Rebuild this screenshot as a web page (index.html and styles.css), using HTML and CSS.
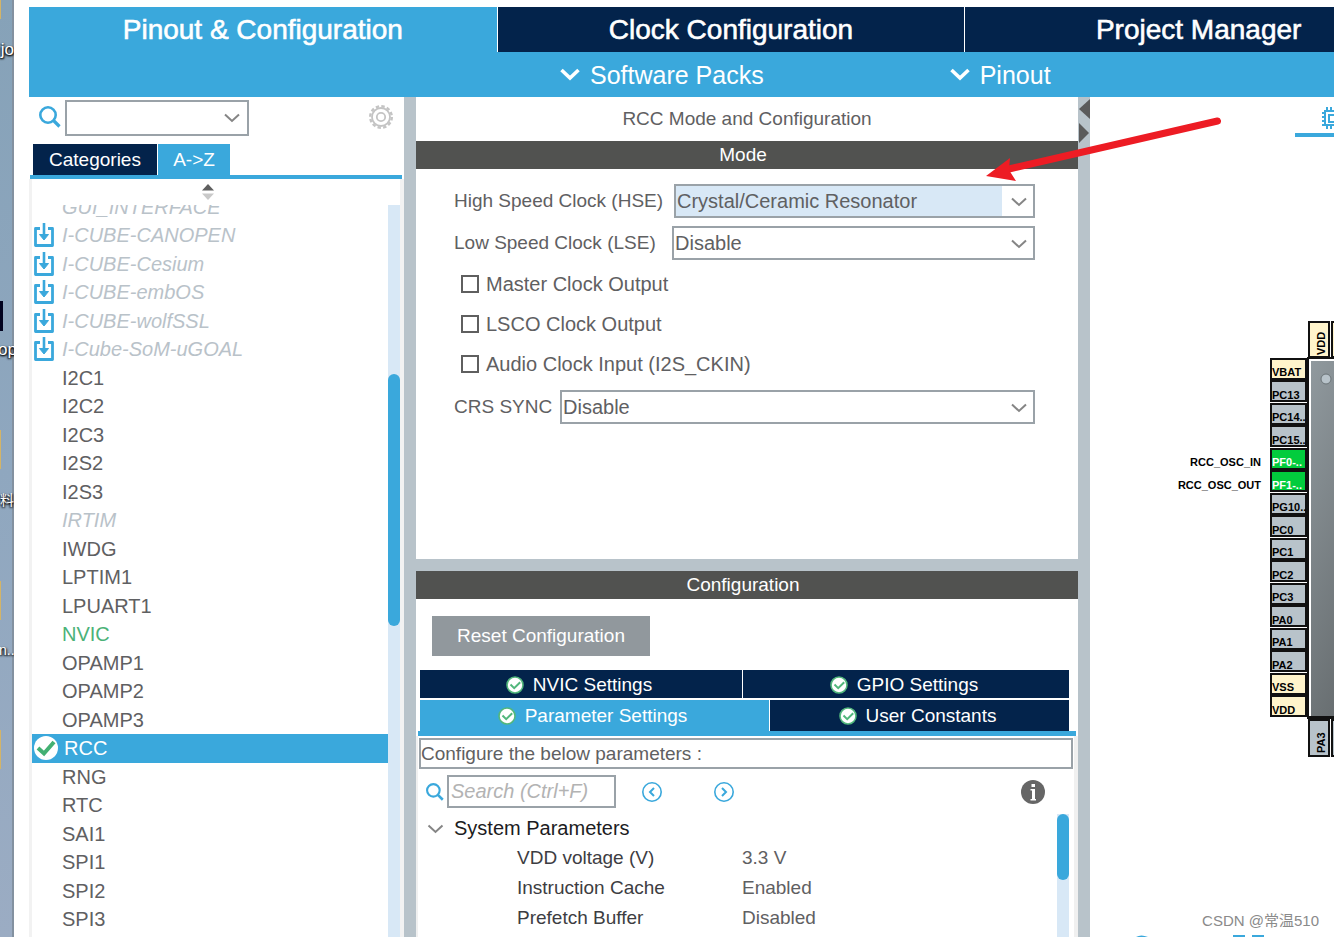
FILE: index.html
```html
<!DOCTYPE html>
<html lang="en">
<head>
<meta charset="utf-8">
<title>Pinout &amp; Configuration</title>
<link rel="stylesheet" href="styles.css">
</head>
<body>
<svg class="defs" aria-hidden="true">
  <defs>
    <symbol id="down" viewBox="0 0 16 10"><path d="M1 1.500l7 6.500l7-6.500" fill="none" stroke="currentColor" stroke-width="2"/></symbol>
    <symbol id="search" viewBox="0 0 22 22"><circle cx="9" cy="9" r="7.700" fill="none" stroke="#3aa8dc" stroke-width="2.600"/><path d="M14.500 14.500l6 6" stroke="#3aa8dc" stroke-width="3.200"/></symbol>
    <symbol id="pack" viewBox="0 0 20 24"><path d="M6 5.500H1.500V22.500h17v-17H14" fill="none" stroke="#3aa8dc" stroke-width="2.800" stroke-linejoin="round"/><path d="M10 0v15" stroke="#3aa8dc" stroke-width="2.600"/><path d="M5.500 11.500h9L10 17z" fill="#3aa8dc" stroke="#3aa8dc"/></symbol>
    <symbol id="ok" viewBox="0 0 18 18"><circle cx="9" cy="9" r="8" fill="#fff" stroke="#52b77c" stroke-width="1.600"/><path d="M4.500 8.500l3.700 3.700l6-6" fill="none" stroke="#52b77c" stroke-width="2"/></symbol>
  </defs>
</svg>

<aside class="desktop">
  <i class="folder f1"></i><i class="folder f2"></i><i class="folder f3"></i><i class="folder f4"></i><i class="dark"></i>
  <span class="d1">jo</span><span class="d2">op</span><span class="d3">料</span><span class="d4">n..</span>
</aside>

<div class="app">
  <header>
    <nav class="tabs">
      <button class="on">Pinout &amp; Configuration</button>
      <button>Clock Configuration</button>
      <button>Project Manager</button>
    </nav>
    <div class="sub">
      <button><svg viewBox="0 0 20 13"><path d="M1.500 2l8.500 8l8.500-8" fill="none" stroke="#fff" stroke-width="3.600"/></svg>Software Packs</button>
      <button><svg viewBox="0 0 20 13"><path d="M1.500 2l8.500 8l8.500-8" fill="none" stroke="#fff" stroke-width="3.600"/></svg>Pinout</button>
    </div>
  </header>

  <main>
    <section class="left">
      <div class="find">
        <svg class="mag"><use href="#search"/></svg>
        <div class="combo"><select aria-label="Search peripheral"><option></option></select><svg><use href="#down"/></svg></div>
        <button class="gear" aria-label="Settings"><svg viewBox="0 0 26 26" fill="none" stroke="#c4c4c4"><circle cx="13" cy="13" r="4.200" stroke-width="1.800"/><circle cx="13" cy="13" r="9" stroke-width="1.800"/><circle cx="13" cy="13" r="10.800" stroke-width="2.400" stroke-dasharray="3.400 2.255"/></svg></button>
      </div>
      <nav class="cats"><button>Categories</button><button class="on">A-&gt;Z</button></nav>
      <div class="listbox">
        <svg class="sort" viewBox="0 0 12 16"><path d="M0 6.500L6 0l6 6.500z" fill="#5f5f5f"/><path d="M0 9.500h12L6 16z" fill="#c9c9c9"/></svg>
        <div class="scroll">
          <ul>
            <li class="off">GUI_INTERFACE</li>
            <li class="off"><svg><use href="#pack"/></svg>I-CUBE-CANOPEN</li>
            <li class="off"><svg><use href="#pack"/></svg>I-CUBE-Cesium</li>
            <li class="off"><svg><use href="#pack"/></svg>I-CUBE-embOS</li>
            <li class="off"><svg><use href="#pack"/></svg>I-CUBE-wolfSSL</li>
            <li class="off"><svg><use href="#pack"/></svg>I-Cube-SoM-uGOAL</li>
            <li>I2C1</li><li>I2C2</li><li>I2C3</li><li>I2S2</li><li>I2S3</li>
            <li class="off">IRTIM</li>
            <li>IWDG</li><li>LPTIM1</li><li>LPUART1</li>
            <li class="green">NVIC</li>
            <li>OPAMP1</li><li>OPAMP2</li><li>OPAMP3</li>
            <li class="sel"><svg viewBox="0 0 24 24"><circle cx="12" cy="12" r="12" fill="#fff"/><path d="M4 12l6 5.500L20 6" fill="none" stroke="#43b072" stroke-width="4"/></svg>RCC</li>
            <li>RNG</li><li>RTC</li><li>SAI1</li><li>SPI1</li><li>SPI2</li><li>SPI3</li>
          </ul>
          <div class="track"><div class="thumb"></div></div>
        </div>
      </div>
    </section>

    <div class="split"></div>

    <section class="mid">
      <h1>RCC Mode and Configuration</h1>
      <h2>Mode</h2>
      <form class="mode">
        <div class="row hse"><label for="hse">High Speed Clock (HSE)</label><div class="combo"><select id="hse" class="lit"><option>Crystal/Ceramic Resonator</option></select><svg><use href="#down"/></svg></div></div>
        <div class="row lse"><label for="lse">Low Speed Clock (LSE)</label><div class="combo"><select id="lse"><option>Disable</option></select><svg><use href="#down"/></svg></div></div>
        <div class="checks">
          <label><input type="checkbox">Master Clock Output</label>
          <label><input type="checkbox">LSCO Clock Output</label>
          <label><input type="checkbox">Audio Clock Input (I2S_CKIN)</label>
        </div>
        <div class="row crs"><label for="crs">CRS SYNC</label><div class="combo"><select id="crs"><option>Disable</option></select><svg><use href="#down"/></svg></div></div>
      </form>
      <div class="bar"></div>
      <h2>Configuration</h2>
      <div class="config">
        <button class="reset">Reset Configuration</button>
        <nav class="settings">
          <div class="r1"><button><svg><use href="#ok"/></svg>NVIC Settings</button><button><svg><use href="#ok"/></svg>GPIO Settings</button></div>
          <div class="r2"><button class="on"><svg><use href="#ok"/></svg>Parameter Settings</button><button><svg><use href="#ok"/></svg>User Constants</button></div>
        </nav>
        <div class="params">
          <p>Configure the below parameters :</p>
          <div class="tools">
            <svg class="mag"><use href="#search"/></svg>
            <input type="text" placeholder="Search (Ctrl+F)" aria-label="Search parameters">
            <button aria-label="Previous"><svg viewBox="0 0 22 22" fill="none" stroke="#3aa8dc" stroke-width="1.600"><circle cx="11" cy="11" r="9.200"/><path d="M13 7l-4 4l4 4" stroke-width="2"/></svg></button>
            <button aria-label="Next"><svg viewBox="0 0 22 22" fill="none" stroke="#3aa8dc" stroke-width="1.600"><circle cx="11" cy="11" r="9.200"/><path d="M9 7l4 4l-4 4" stroke-width="2"/></svg></button>
            <button class="info" aria-label="Information"><svg viewBox="0 0 24 24"><circle cx="12" cy="12" r="12" fill="#666"/><path d="M10.500 4h3.500v3h-3.500zM9.500 9H14v10h1v1.500H9.500V19h1.500v-8.500H9.500z" fill="#fff"/></svg></button>
          </div>
          <div class="tree">
            <div class="nodes">
              <h3><svg><use href="#down"/></svg>System Parameters</h3>
              <table>
                <tr><th>VDD voltage (V)</th><td>3.3 V</td></tr>
                <tr><th>Instruction Cache</th><td>Enabled</td></tr>
                <tr><th>Prefetch Buffer</th><td>Disabled</td></tr>
              </table>
            </div>
            <div class="track"><div class="thumb"></div></div>
          </div>
        </div>
      </div>
    </section>

    <div class="split">
      <svg viewBox="0 0 12 50"><path d="M12 2v20L1 12z" fill="#5b5b5b"/><path d="M1 26v20l10-10z" fill="#5b5b5b"/></svg>
    </div>

    <section class="view">
      <div class="canvas">
      <svg class="chip" width="400" height="840" viewBox="0 0 400 840">
        <defs>
          <linearGradient id="body" x1="0" y1="0" x2="1" y2="1"><stop offset="0" stop-color="#90999e"/><stop offset="1" stop-color="#4c5051"/></linearGradient>
        </defs>
        <g fill="none" stroke="#3aa8dc" stroke-width="2"><rect x="235" y="14" width="16" height="14"/><rect x="239" y="18" width="10" height="7"/><path d="M237 10v4M241 10v4M245 10v4M237 28v4M241 28v4M245 28v4M232 16h3M232 20h3M232 24h3M232 28h3"/></g>
        <path d="M205 36h195v4H205z" fill="#3aa8dc"/>
        <path d="M217 260h140v362H217z" fill="#111"/>
        <path d="M219 262h140v357H219z" fill="#fff"/>
        <path d="M221 264h140v355H221z" fill="url(#body)"/>
        <circle cx="236" cy="282" r="5" fill="#b8c3ca" stroke="#6b7478"/>
        <g stroke="#111" stroke-width="2">
          <g fill="#fff4cb"><path d="M219 225h20v35h-20zM242 225h20v35h-20z"/><path d="M181 262h35v20h-35zM181 577h35v20h-35zM181 599h35v20h-35z"/></g>
          <g fill="#b8c3ca"><path d="M219 623h20v36h-20zM242 623h20v36h-20z"/><path d="M181 284h35v20h-35zM181 307h35v20h-35zM181 329h35v20h-35zM181 397h35v20h-35zM181 419h35v20h-35zM181 442h35v20h-35zM181 464h35v20h-35zM181 487h35v20h-35zM181 509h35v20h-35zM181 532h35v20h-35zM181 554h35v20h-35z"/></g>
          <path d="M181 352h35v20h-35zM181 374h35v20h-35z" fill="#02cc3d"/>
        </g>
        <g class="pins">
          <text x="182" y="279">VBAT</text><text x="182" y="302">PC13</text><text x="182" y="324">PC14..</text><text x="182" y="347">PC15..</text>
          <text x="182" y="369" fill="#fff">PF0-..</text><text x="182" y="392" fill="#fff">PF1-..</text><text x="182" y="414">PG10..</text>
          <text x="182" y="437">PC0</text><text x="182" y="459">PC1</text><text x="182" y="482">PC2</text><text x="182" y="504">PC3</text><text x="182" y="527">PA0</text><text x="182" y="549">PA1</text><text x="182" y="572">PA2</text><text x="182" y="594">VSS</text><text x="182" y="617">VDD</text>
          <text x="171" y="369" text-anchor="end">RCC_OSC_IN</text><text x="171" y="392" text-anchor="end">RCC_OSC_OUT</text>
          <text transform="translate(235 258) rotate(-90)">VDD</text><text transform="translate(235 656) rotate(-90)">PA3</text>
        </g>
        <path d="M46 840q5-3 12 0zM143 838h12v2h-12zM162 838h12v2h-12z" fill="#3aa8dc"/>
      </svg>
      </div>
      <span class="mark">CSDN @常温510</span>
      <svg class="arrow" viewBox="0 0 240 70"><path d="M234.500 6L26 54" stroke="#ed1c24" stroke-width="7" stroke-linecap="round"/><path d="M3 61L27 43l-1 12l7 11z" fill="#ed1c24"/></svg>
    </section>
  </main>
</div>
</body>
</html>
```
FILE: styles.css
```css
* { box-sizing: border-box; }
body {
  margin: 0;
  height: 100vh;
  overflow: hidden;
  display: flex;
  background: #fff;
  color: #5f6062;
  font: 20px/28px "Liberation Sans", "Noto Sans CJK SC", sans-serif;
}
button, select, input { font: inherit; color: inherit; margin: 0; border-radius: 0; }
button { border: 0; padding: 0; background: none; white-space: nowrap; }
svg { display: block; flex: none; }
h1, h2, h3, p, ul { margin: 0; padding: 0; font-weight: normal; }
.defs { position: absolute; width: 0; height: 0; }

/* strip of desktop beside the window */
.desktop {
  position: relative;
  flex: 0 0 14px;
  overflow: hidden;
  background: linear-gradient(#86a2b8, #8fa7bf 50%, #9bacc3);
  box-shadow: inset -2px 0 #8391a0;
}
.desktop span { position: absolute; color: #fff; font-size: 17px; line-height: 20px; text-shadow: 1px 1px 2px #000, -1px 1px 2px #000; white-space: nowrap; }
.desktop .d1 { right: 0; top: 40px; }
.desktop .d2 { left: -2px; top: 340px; }
.desktop .d3 { left: 0; top: 490px; font-size: 14px; }
.desktop .d4 { left: -1px; top: 640px; font-size: 14px; }
.folder { position: absolute; left: 0; width: 1px; height: 39px; background: #d3b468; }
.f1 { top: -20px; }
.f2 { top: 430px; }
.f3 { top: 581px; }
.f4 { top: 730px; }
.dark { position: absolute; left: 0; top: 301px; width: 3px; height: 30px; background: #02031f; }

.app { flex: 1; min-width: 0; display: flex; flex-direction: column; padding: 7px 0 0 15px; }
header { overflow: hidden; background: #3aa8dc; color: #fff; }
.tabs { width: calc(100% + 98px); display: grid; grid-template-columns: repeat(3, 1fr); }
.tabs button { height: 45px; background: #03234b; font-size: 28px; border-left: 1px solid #fff; -webkit-text-stroke: thin #fff; }
.tabs .on { background: #3aa8dc; border: 0; }
.sub { height: 45px; display: flex; gap: 186px; padding-left: 531px; font-size: 25px; }
.sub button { display: flex; align-items: center; gap: 10px; }
.sub svg { width: 20px; height: 13px; }

main { flex: 1; min-height: 0; display: flex; }
.split { flex: 0 0 12px; background: #b8c3ca; }
.split svg { width: 12px; height: 50px; }

.combo { position: relative; flex: 1; }
.combo svg { position: absolute; right: 8px; top: 13px; width: 16px; height: 10px; color: #858585; pointer-events: none; }
select { appearance: none; display: block; width: 100%; height: 34px; padding: 0 1px; border: 2px solid #9aa2a8; background: #fff; }
.lit { background: linear-gradient(to left, #fff 31px, #d8e8f6 31px); }

.left { flex: 0 0 375px; display: flex; flex-direction: column; }
.find { display: flex; padding: 3px 10px 0 10px; height: 47px; }
.find .mag { width: 22px; height: 22px; margin: 6px 4px 0 0; }
.find .combo { flex: 0 0 184px; }
.find select { height: 36px; }
.find .combo svg { right: 9px; }
.gear { margin-left: auto; height: 33px; }
.gear svg { width: 26px; height: 26px; }
.cats { display: flex; gap: 1px; padding-left: 3px; border-bottom: 4px solid #3aa8dc; margin: 0 2px 0 1px; font-size: 19px; }
.cats button { height: 31px; color: #fff; background: #03234b; flex: 0 0 124px; }
.cats .on { flex-basis: 72px; background: #3aa8dc; }
.listbox { flex: 1; min-height: 0; display: flex; flex-direction: column; border: solid #f2f2f2; border-width: 0 4px 0 3px; }
.sort { align-self: center; width: 12px; height: 16px; margin: 5px 16px 5px 0; }
.scroll { flex: 1; min-height: 0; display: flex; overflow: hidden; }
.scroll ul { flex: 1; list-style: none; margin-top: -12px; }
.scroll li { position: relative; height: 28px; padding-left: 30px; }
.scroll li:nth-child(even) { height: 29px; }
.scroll li svg { position: absolute; left: 2px; top: 2px; width: 20px; height: 24px; }
.scroll .off { color: #b9c2c9; font-style: italic; }
.scroll .green { color: #4bb278; }
.scroll .sel { background: #3aa8dc; color: #fff; padding-left: 32px; }
.scroll .sel svg { width: 24px; }
.track { flex: 0 0 12px; background: #d8e8f6; }
.thumb { border-radius: 6px; background: #3aa8dc; }
.scroll .thumb { margin-top: 169px; height: 252px; }

.mid { flex: 0 0 662px; display: flex; flex-direction: column; }
h1 { font-size: 19px; line-height: 44px; text-align: center; }
h2 { font-size: 19px; line-height: 28px; padding-right: 8px; text-align: center; background: #515250; color: #fff; }
.mode { flex: 0 0 390px; padding: 15px 43px 0 38px; }
.row { display: flex; align-items: center; height: 34px; margin-bottom: 8px; white-space: nowrap; }
.row label { font-size: 19px; }
.hse label { flex: 0 0 220px; }
.lse label { flex: 0 0 218px; }
.crs label { flex: 0 0 106px; }
.checks { display: grid; gap: 12px; padding: 2px 0 12px 7px; }
.checks label { display: flex; align-items: center; gap: 7px; }
.checks input { appearance: none; width: 18px; height: 18px; border: 2px solid #5f5f5f; background: #fff; }
.bar { flex: 0 0 12px; background: #b8c3ca; }

.config { flex: 1; min-height: 0; display: flex; flex-direction: column; }
.reset { flex: none; width: 218px; height: 40px; margin: 17px 0 14px 16px; background: #91989d; color: #fff; font-size: 19px; }
.settings { border-bottom: 5px solid #3aa8dc; margin: 0 2px; padding: 0 7px 0 2px; font-size: 19px; }
.settings div { display: grid; column-gap: 1px; }
.r1 { grid-template-columns: 322fr 326fr; margin-bottom: 2px; }
.r2 { grid-template-columns: 349fr 299fr; }
.settings button { display: flex; align-items: center; justify-content: center; gap: 9px; height: 28px; padding: 2px 4px 0 0; background: #03234b; color: #fff; }
.r2 button { height: 31px; padding-top: 0; }
.settings .on { background: #3aa8dc; }
.settings svg { width: 18px; height: 18px; }
.params { flex: 1; min-height: 0; display: flex; flex-direction: column; padding: 2px 1px 0; border: solid #f0f0f0; border-width: 0 4px 0 2px; }
.params p { font-size: 19px; line-height: 27px; border: 2px solid #9aa2a8; }
.tools { display: flex; align-items: center; padding: 6px 28px 0 7px; }
.tools .mag { width: 18px; height: 18px; margin-right: 3px; }
.tools input { width: 169px; height: 33px; padding: 0 2px; border: 2px solid #9aa2a8; margin-right: 25px; }
.tools input::placeholder { color: #b3b3b3; font-style: italic; opacity: 1; }
.tools button { margin-right: 50px; }
.tools button svg { width: 22px; height: 22px; }
.tools .info { margin: 0 0 0 auto; }
.tools .info svg { width: 24px; height: 24px; }
.tree { flex: 1; min-height: 0; display: flex; padding: 6px 4px 0 8px; }
.nodes { flex: 1; overflow: hidden; }
.tree .thumb { height: 66px; }
h3 { display: flex; align-items: center; gap: 10px; font-size: 20px; line-height: 29px; color: #1c1c22; }
h3 svg { width: 17px; height: 10px; color: #858585; }
table { border-collapse: collapse; font-size: 19px; margin-left: 90px; }
th, td { padding: 0; height: 30px; text-align: left; font-weight: normal; white-space: nowrap; }
th { width: 225px; color: #3d3d42; }

.view { flex: 1; min-width: 0; position: relative; }
.canvas { height: 100%; overflow: hidden; }
.pins { font: bold 11px "Liberation Sans", sans-serif; }
.arrow { position: absolute; left: -107px; top: 18px; width: 240px; height: 70px; pointer-events: none; }
.mark { position: absolute; right: 15px; bottom: 2px; font-size: 15px; color: #8a8a8a; }
```
